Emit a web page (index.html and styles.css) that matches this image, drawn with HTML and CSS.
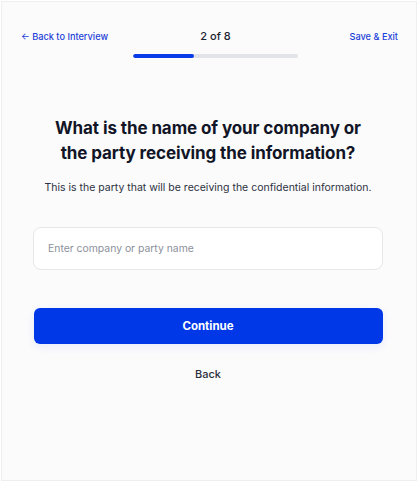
FILE: index.html
```html
<!DOCTYPE html>
<html lang="en">
<head>
<meta charset="utf-8">
<title>Interview</title>
<link rel="stylesheet" href="styles.css">
</head>
<body>
<div class="frame">
  <header class="topbar">
    <a class="link" href="#">← Back to Interview</a>
    <span class="step">2 of 8</span>
    <a class="link link-right" href="#">Save &amp; Exit</a>
    <div class="progress"><div class="progress-fill" style="width:37%"></div></div>
  </header>
  <main class="content">
    <h1 class="title">What is the name of your company or the party receiving the information?</h1>
    <p class="subtitle">This is the party that will be receiving the confidential information.</p>
    <input class="field" type="text" placeholder="Enter company or party name">
    <button class="primary" type="button">Continue</button>
    <button class="secondary" type="button">Back</button>
  </main>
</div>
</body>
</html>
```
FILE: styles.css
```css
* { box-sizing: border-box; }
html, body { margin: 0; padding: 0; background: #ffffff; }
body { font-family: Inter, "Noto Sans", sans-serif; color: #151a2b; }
.frame {
  width: 416px;
  height: 480px;
  margin: 1px;
  border: 1px solid #efeff1;
  background: #fbfbfc;
  display: flex;
  flex-direction: column;
}
.topbar {
  display: grid;
  grid-template-columns: 112px 165px 1fr;
  align-items: center;
  row-gap: 11px;
  padding: 27px 18px 0 19px;
}
.link {
  color: #1e3fd8;
  font-size: 9.2px;
  font-weight: 500;
  text-decoration: none;
  white-space: nowrap;
}
.link-right { text-align: right; }
.step { font-size: 11px; font-weight: 500; color: #1d2230; text-align: center; }
.progress {
  grid-column: 2;
  height: 4px;
  border-radius: 2px;
  background: #e2e3e6;
  overflow: hidden;
}
.progress-fill { height: 100%; background: #0a3be8; border-radius: 2px; }
.content {
  display: flex;
  flex-direction: column;
  align-items: center;
  padding: 0 33px 0 31px;
}
.title {
  margin: 58px 0 0;
  font-size: 17px;
  line-height: 25px;
  font-weight: 700;
  text-align: center;
  color: #111526;
  width: 310px;
  letter-spacing: -0.1px;
}
.subtitle {
  margin: 15px 0 0;
  font-size: 10.5px;
  color: #2d3140;
  text-align: center;
}
.field {
  margin-top: 33px;
  width: 350px;
  height: 43px;
  border: 1px solid #e6e7ea;
  border-radius: 8px;
  background: #ffffff;
  padding: 0 14px;
  font-family: inherit;
  font-size: 10.4px;
  color: #111526;
}
.field::placeholder { color: #8c909b; }
.primary {
  margin-top: 38px;
  width: 349px;
  height: 36px;
  border: none;
  border-radius: 6px;
  background: #0038e8;
  color: #ffffff;
  font-family: inherit;
  font-size: 11.5px;
  font-weight: 700;
  box-shadow: 0 3px 8px rgba(0, 56, 232, 0.08);
}
.secondary {
  margin-top: 19px;
  border: none;
  background: none;
  font-family: inherit;
  font-size: 11px;
  font-weight: 500;
  color: #2b2f3b;
  padding: 4px 8px;
}
```
